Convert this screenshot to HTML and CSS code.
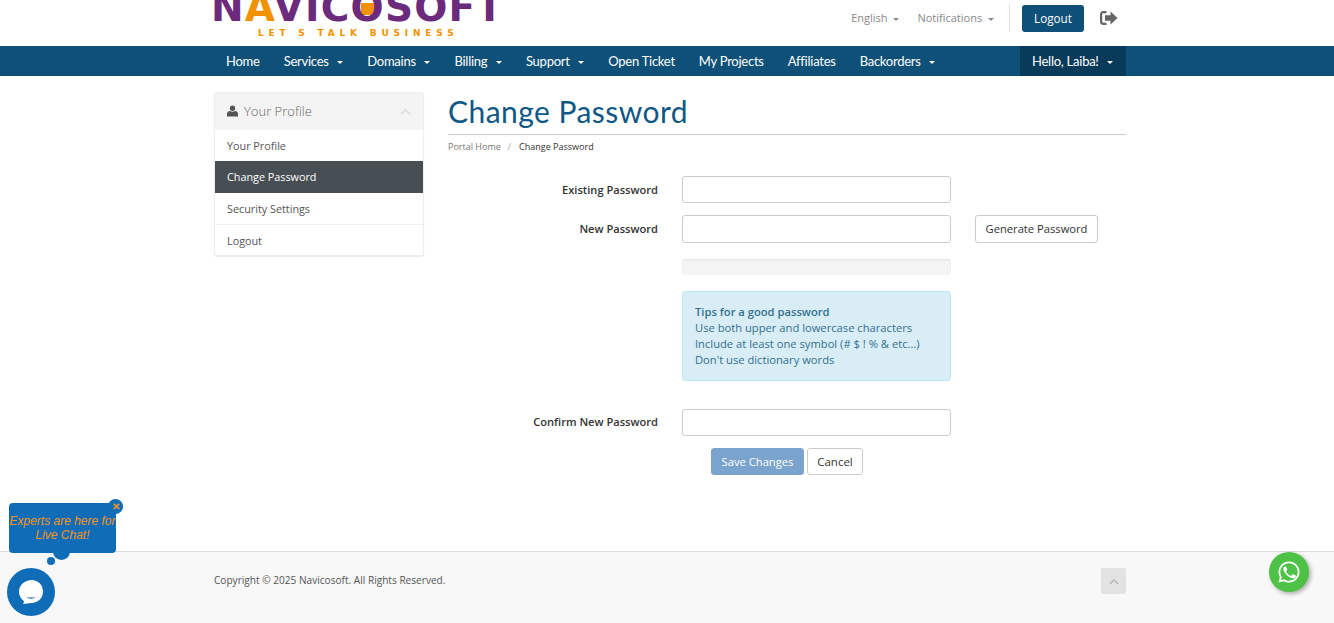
FILE: index.html
```html
<!DOCTYPE html>
<html lang="en">
<head>
<meta charset="utf-8">
<title>Change Password</title>
<link rel="stylesheet" href="styles.css">
</head>
<body>
<header class="topbar">
  <div class="wrap topbar-inner">
    <a class="logo" href="#">
      <span class="logo-name">N<span class="logo-a">A</span>VIC<span class="logo-o">O</span>SOFT</span>
      <span class="logo-tag">LET S TALK BUSINESS</span>
    </a>
    <div class="top-links">
      <a class="top-link" href="#">English <i class="caret"></i></a>
      <a class="top-link" href="#">Notifications <i class="caret"></i></a>
      <span class="top-sep"></span>
      <a class="btn-logout" href="#">Logout</a>
      <svg class="logout-icon" viewBox="0 0 18 14" width="18" height="14"><path fill="#666" d="M6.500 0H3.200C1.400 0 0 1.400 0 3.200v7.600C0 12.600 1.400 14 3.200 14h3.300v-2.200H3.400c-.7 0-1.200-.5-1.200-1.200V3.400c0-.7.5-1.200 1.200-1.200h3.100z"/><path fill="#666" d="M10.500.6 17.500 7l-7 6.400V9.800H5V4.200h5.500z"/></svg>
    </div>
  </div>
</header>
<nav class="mainnav">
  <div class="wrap nav-inner">
    <ul class="nav-list">
      <li><a href="#">Home</a></li>
      <li><a href="#">Services <i class="caret"></i></a></li>
      <li><a href="#">Domains <i class="caret"></i></a></li>
      <li><a href="#">Billing <i class="caret"></i></a></li>
      <li><a href="#">Support <i class="caret"></i></a></li>
      <li><a href="#">Open Ticket</a></li>
      <li><a href="#">My Projects</a></li>
      <li><a href="#">Affiliates</a></li>
      <li><a href="#">Backorders <i class="caret"></i></a></li>
    </ul>
    <a class="nav-hello" href="#">Hello, Laiba! <i class="caret"></i></a>
  </div>
</nav>
<main class="wrap content">
  <aside class="side-panel">
    <div class="panel-head">
      <svg class="user-icon" viewBox="0 0 12 12" width="11" height="12"><circle cx="6" cy="3" r="2.900" fill="#555"/><path fill="#555" d="M0 12V9c0-1.800 1.500-2.800 3.200-3 1.700 1 3.900 1 5.600 0 1.700.2 3.200 1.200 3.200 3v3z"/></svg>
      <span class="panel-title">Your Profile</span>
      <svg class="chev" viewBox="0 0 12 8" width="11" height="7"><path d="M1 7 6 2l5 5" fill="none" stroke="#ddd" stroke-width="2"/></svg>
    </div>
    <a class="side-item first" href="#">Your Profile</a>
    <a class="side-item active" href="#">Change Password</a>
    <a class="side-item" href="#">Security Settings</a>
    <a class="side-item" href="#">Logout</a>
  </aside>
  <section class="main-col">
    <h1 class="page-title">Change Password</h1>
    <div class="crumbs"><a href="#">Portal Home</a><span class="crumb-sep">/</span><span class="crumb-cur">Change Password</span></div>
    <form class="pw-form">
      <div class="row">
        <label class="lbl">Existing Password</label>
        <input class="field" type="password">
      </div>
      <div class="row row-new">
        <label class="lbl">New Password</label>
        <input class="field field-tall" type="password">
        <button class="btn-gen" type="button">Generate Password</button>
      </div>
      <div class="meter"></div>
      <div class="tips">
        <strong>Tips for a good password</strong><br>
        Use both upper and lowercase characters<br>
        Include at least one symbol (# $ ! % &amp; etc...)<br>
        Don't use dictionary words
      </div>
      <div class="row row-confirm">
        <label class="lbl">Confirm New Password</label>
        <input class="field" type="password">
      </div>
      <div class="actions">
        <button class="btn-save" type="button">Save Changes</button>
        <button class="btn-cancel" type="button">Cancel</button>
      </div>
    </form>
  </section>
</main>
<footer class="footer">
  <div class="wrap footer-inner">
    <p class="copy">Copyright © 2025 Navicosoft. All Rights Reserved.</p>
    <a class="to-top" href="#"><svg viewBox="0 0 12 8" width="10" height="7"><path d="M1 7 6 2l5 5" fill="none" stroke="#bbb" stroke-width="2"/></svg></a>
  </div>
</footer>
<div class="chat-bubble">
  <span class="chat-text">Experts are here for Live Chat!</span>
  <span class="chat-close">✕</span>
  <span class="dot-big"></span>
  <span class="dot-small"></span>
</div>
<div class="chat-launch">
  <svg viewBox="0 0 24 24" width="24" height="24"><path fill="#fff" d="M12.500 0C19 0 24 5 24 11.500S19 23 12.500 23c-2.500 0-6 1-8.500 1 .8-.8 1-2 .8-3C2 19 0 15.500 0 11.500 0 5 6 0 12.500 0z"/><path fill="#0f6cb6" d="M8 17c2.500.8 5.500.8 8 0-.5 2.200-7.500 2.200-8 0z"/></svg>
</div>
<a class="wa" href="#">
  <svg viewBox="0 0 24 24" width="24" height="24"><path fill="#fff" d="M12 1.500C6.200 1.500 1.500 6.200 1.500 12c0 1.900.5 3.700 1.400 5.300L1.400 22.600l5.400-1.400c1.500.8 3.300 1.300 5.200 1.300 5.800 0 10.500-4.700 10.500-10.500S17.800 1.500 12 1.500zm0 19.200c-1.700 0-3.200-.5-4.600-1.300l-.3-.2-3.200.8.900-3.100-.2-.3C3.700 15.200 3.300 13.600 3.300 12c0-4.800 3.900-8.700 8.700-8.700s8.700 3.900 8.700 8.700-3.900 8.700-8.700 8.700z"/><path fill="#fff" d="M9 7c-.3-.6-.5-.6-.9-.6-.5 0-1.800.7-1.800 2.400 0 1.800 1.300 3.600 1.500 3.800.2.300 2.600 4.100 6.400 5.400 2.500.8 3.800.1 4.300-.7.400-.6.500-1.400.4-1.700-.1-.2-2.300-1.300-2.700-1.400-.4-.1-.6-.2-.9.200l-1 1.300c-.2.200-.4.300-.8.100-1.900-.9-3.400-2.300-4.400-4.100-.2-.4 0-.5.200-.7l.9-1.200c.1-.3.100-.5 0-.7z"/></svg>
</a>
</body>
</html>
```
FILE: styles.css
```css
* { box-sizing: border-box; }
html, body { margin: 0; padding: 0; }
body {
  width: 1334px;
  height: 623px;
  overflow: hidden;
  position: relative;
  font-family: "Open Sans", sans-serif;
  font-size: 11px;
  color: #333;
  background: #fff;
}
a { text-decoration: none; color: inherit; }
.wrap { width: 912px; margin: 0 0 0 214px; }
.caret {
  display: inline-block;
  width: 0;
  height: 0;
  margin-left: 3px;
  vertical-align: middle;
  border-top: 3px solid currentColor;
  border-left: 3px solid transparent;
  border-right: 3px solid transparent;
}

/* top bar */
.topbar { height: 46px; overflow: hidden; }
.topbar-inner { display: flex; justify-content: space-between; height: 46px; }
.logo { display: flex; flex-direction: column; margin: -14px 0 0 -3px; width: 284px; flex: none; }
.logo-name {
  font-family: "DejaVu Sans", sans-serif;
  font-weight: 700;
  font-size: 39px;
  line-height: 44px;
  height: 44px;
  letter-spacing: 1.200px;
  color: #6c2a7c;
  white-space: nowrap;
}
.logo-a { color: #f39200; }
.logo-o { background: linear-gradient(#f39200, #f39200) 50% 18px / 14px 12px no-repeat; }
.logo-tag {
  font-family: "DejaVu Sans", sans-serif;
  font-weight: 700;
  font-size: 9px;
  line-height: 12px;
  margin: -3px 0 0 47px;
  letter-spacing: 4.800px;
  color: #f39200;
  white-space: nowrap;
}
.top-links { display: flex; align-items: center; height: 36px; color: #888; }
.top-link { font-size: 11px; margin-right: 18px; white-space: nowrap; padding-bottom: 1px; }
.top-link:nth-child(2) { margin-right: 15px; }
.top-sep { width: 1px; height: 28px; background: #e2e2e2; margin-right: 12px; }
.btn-logout {
  display: block;
  width: 62px;
  height: 27px;
  line-height: 27px;
  text-align: center;
  background: #0e5077;
  color: #fff;
  border-radius: 3px;
  font-size: 11.700px;
  margin-right: 16px;
  margin-top: 1px;
}
.logout-icon { margin-right: 8px; }

/* nav */
.mainnav { height: 30px; background: #0e5077; }
.nav-inner { display: flex; justify-content: space-between; height: 30px; }
.nav-list { list-style: none; margin: 0; padding: 0; display: flex; }
.nav-list a, .nav-hello {
  display: block;
  height: 30px;
  line-height: 30px;
  padding: 0 12px;
  font-family: "Lato", sans-serif;
  font-size: 13px;
  letter-spacing: -.25px;
  color: #fff;
  white-space: nowrap;
}
.nav-list .caret, .nav-hello .caret { margin-left: 5.500px; }
.nav-hello { background: #083a5a; width: 106px; }

/* content */
.content { display: flex; gap: 24px; height: 475px; padding-top: 16px; }
.side-panel {
  width: 210px;
  height: 164px;
  flex: none;
  background: #fff;
  border: 1px solid #eee;
  border-radius: 3px;
  box-shadow: 0 1px 1px rgba(0,0,0,.08);
}
.panel-head {
  display: flex;
  align-items: center;
  height: 37px;
  padding: 0 12px 1px;
  background: #f4f4f4;
}
.user-icon { margin-right: 6px; }
.panel-title { font-size: 13px; font-weight: 300; color: #666; flex: 1; padding-bottom: 1px; }
.side-item {
  display: block;
  height: 32px;
  line-height: 31px;
  padding: 0 12px;
  font-size: 10.800px;
  color: #555;
  border-bottom: 1px solid #f1f1f1;
}
.side-item.first { height: 31px; border-bottom: 0; }
.side-item:last-child { border-bottom: 0; height: 30px; }
.side-item.active { background: #484f54; color: #fff; border-bottom: 0; }

.main-col { flex: 1; min-width: 0; }
.page-title {
  margin: 0;
  height: 43px;
  font-family: "Lato", sans-serif;
  font-weight: 400;
  font-size: 30px;
  line-height: 38px;
  letter-spacing: .45px;
  color: #0f5885;
  border-bottom: 1px solid #ccc;
}
.crumbs { font-size: 9px; line-height: 12px; margin-top: 6px; color: #777; }
.crumb-sep { margin: 0 8px 0 7px; color: #aaa; }
.crumb-cur { color: #333; }

.pw-form { margin-top: 23px; }
.row { display: flex; align-items: center; }
.lbl {
  width: 210px;
  margin-right: 24px;
  text-align: right;
  font-weight: 600;
  font-size: 11.100px;
  color: #333;
}
.field {
  width: 269px;
  height: 27px;
  border: 1px solid #ccc;
  border-radius: 3px;
  background: #fff;
  display: block;
}
.row-new { margin-top: 12px; }
.row-new .lbl, .row-confirm .lbl { margin-bottom: 2px; }
.field-tall { height: 28px; }
.btn-gen {
  margin-left: 24px;
  width: 123px;
  height: 28px;
  padding: 0 0 2px;
  background: #fff;
  border: 1px solid #ccc;
  border-radius: 3px;
  font-family: inherit;
  font-size: 11.200px;
  color: #333;
}
.meter {
  width: 269px;
  height: 16px;
  margin: 16px 0 0 234px;
  background: #f5f5f5;
  border-radius: 3px;
  box-shadow: inset 0 1px 2px rgba(0,0,0,.08);
}
.tips {
  width: 269px;
  height: 90px;
  margin: 16px 0 0 234px;
  padding: 12px 12px 0;
  background: #d9edf7;
  border: 1px solid #bce8f1;
  border-radius: 3px;
  font-size: 11.200px;
  line-height: 16px;
  color: #31708f;
}
.tips strong { font-weight: 600; }
.row-confirm { margin-top: 28px; }
.actions { display: flex; gap: 3px; margin: 12px 0 0 263px; }
.btn-save, .btn-cancel {
  height: 27px;
  padding: 0;
  border-radius: 3px;
  font-family: inherit;
}
.btn-save { width: 93px; font-size: 11.200px; background: #7aa4cd; border: 1px solid #7aa4cd; color: #fff; }
.btn-cancel { width: 56px; font-size: 11.500px; background: #fff; border: 1px solid #ccc; color: #333; }

/* footer */
.footer { height: 72px; background: #f8f8f8; border-top: 1px solid #ddd; }
.footer-inner { display: flex; justify-content: space-between; align-items: flex-start; padding-top: 16px; }
.copy { margin: 6px 0 0; font-size: 10.100px; line-height: 12px; color: #555; }
.to-top {
  display: flex;
  align-items: center;
  justify-content: center;
  width: 25px;
  height: 26px;
  background: #e3e3e3;
  border-radius: 2px;
}

/* floating widgets */
.chat-bubble {
  position: absolute;
  left: 9px;
  top: 503px;
  width: 107px;
  height: 50px;
  padding-top: 11px;
  background: #0f6cb6;
  border-radius: 4px;
  text-align: center;
}
.chat-text {
  position: relative;
  z-index: 1;
  display: block;
  font-family: "Liberation Sans", sans-serif;
  font-style: italic;
  font-size: 12px;
  line-height: 14px;
  color: #f7941d;
}
.chat-close {
  position: absolute;
  right: -7px;
  top: -4px;
  width: 15px;
  height: 15px;
  line-height: 15px;
  border-radius: 50%;
  background: #0f6cb6;
  color: #f7941d;
  font-size: 10px;
  font-weight: 700;
  text-align: center;
}
.dot-big {
  position: absolute;
  left: 44px;
  top: 40px;
  width: 17px;
  height: 17px;
  border-radius: 50%;
  background: #0f6cb6;
}
.dot-small {
  position: absolute;
  left: 38px;
  top: 54px;
  width: 8px;
  height: 8px;
  border-radius: 50%;
  background: #0f6cb6;
}
.chat-launch {
  position: absolute;
  left: 7px;
  top: 568px;
  width: 48px;
  height: 48px;
  border-radius: 50%;
  background: #0f6cb6;
  display: flex;
  align-items: center;
  justify-content: center;
}
.wa {
  position: absolute;
  left: 1269px;
  top: 552px;
  width: 40px;
  height: 40px;
  border-radius: 50%;
  background: #4dc247;
  box-shadow: 2px 2px 4px rgba(0,0,0,.3);
  display: flex;
  align-items: center;
  justify-content: center;
}
```
